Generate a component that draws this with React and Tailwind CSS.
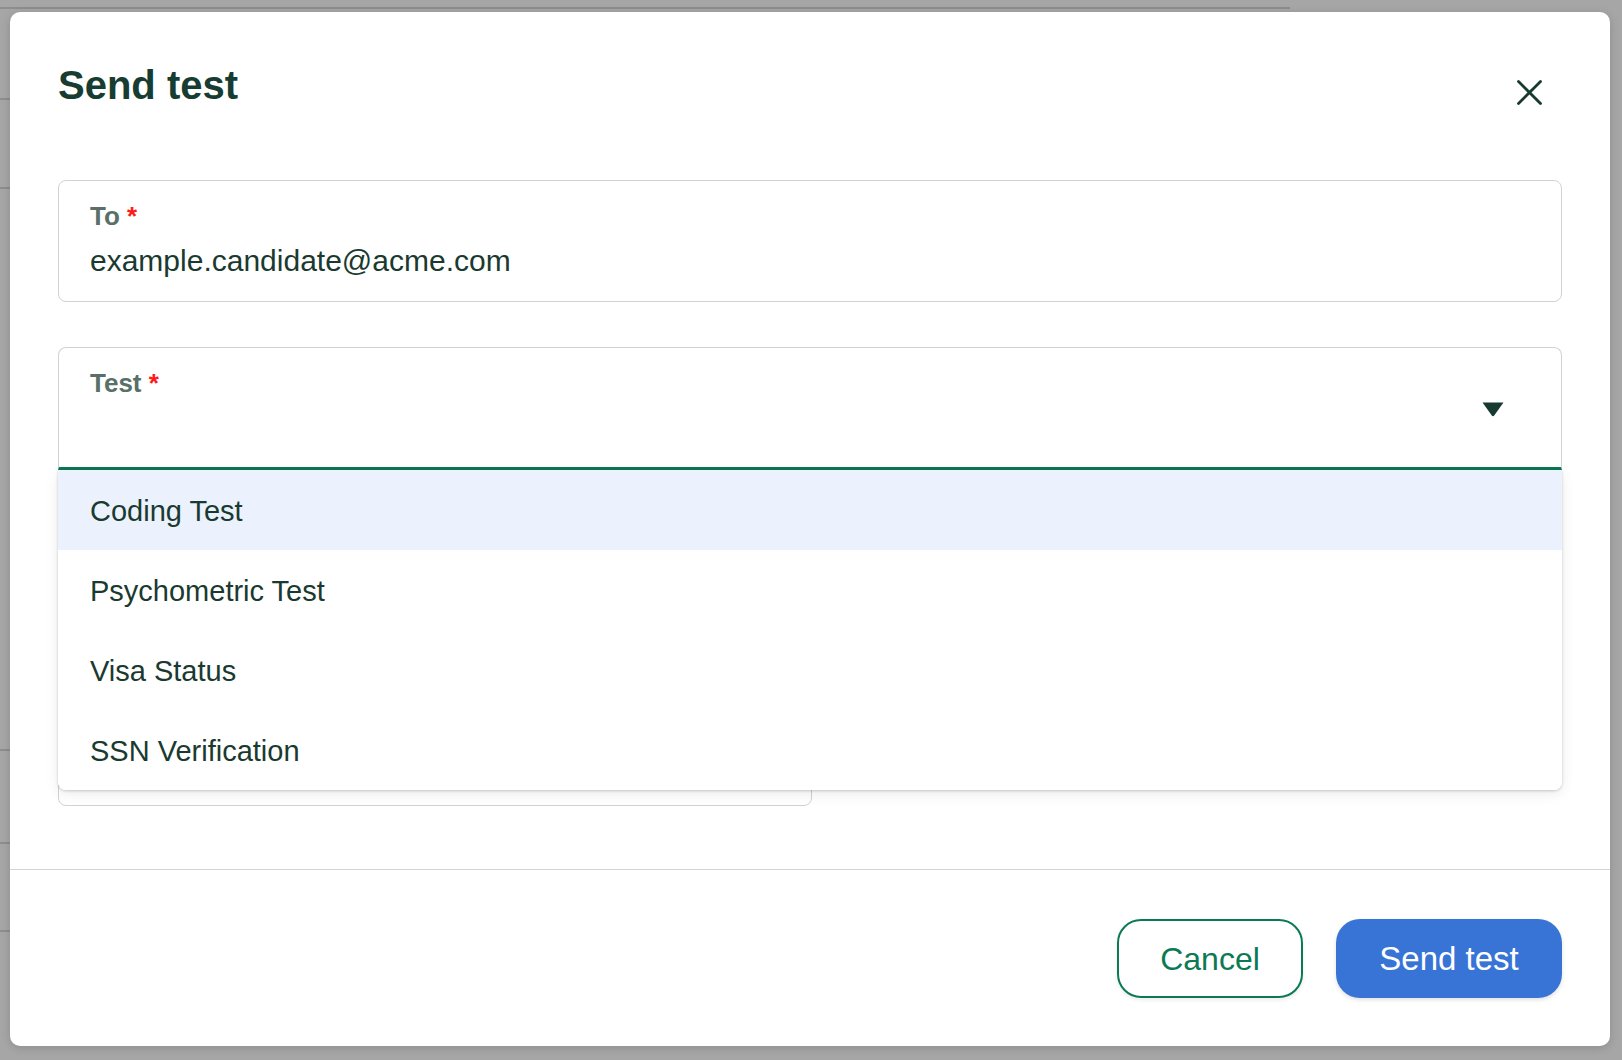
const options = ["Coding Test", "Psychometric Test", "Visa Status", "SSN Verification"];

const Field = ({ label, children, className = "" }) => (
  <div className={`flex flex-col pl-[31px] pt-[19px] border-[1.5px] border-[#cdd5d2] rounded-[8px] ${className}`}>
    <div className="text-[26px] leading-[32px] font-bold text-[#5a6f68]">
      {label} <span className="text-[#ff1a1a]">*</span>
    </div>
    {children}
  </div>
);

const App = () => {
  return (
    <div
      className="relative w-full h-screen bg-[#a6a6a6] overflow-hidden"
      style={{ fontFamily: '"Liberation Sans", Arial, sans-serif' }}
    >
      {/* page behind the overlay */}
      <div className="w-[1290px] h-[9px] border-b-2 border-[#8e8e8e]"></div>
      <div className="w-[10px] flex flex-col">
        <div className="h-[91px] border-b-2 border-[#8e8e8e]"></div>
        <div className="h-[89px] border-b-2 border-[#8e8e8e]"></div>
        <div className="h-[562px] border-b-2 border-[#8e8e8e]"></div>
        <div className="h-[93px] border-b-2 border-[#8e8e8e]"></div>
        <div className="h-[88px] border-b-2 border-[#8e8e8e]"></div>
      </div>

      {/* Modal */}
      <div className="absolute left-[10px] top-[12px] w-[1600px] bg-white rounded-[10px] flex flex-col shadow-[0_2px_10px_rgba(0,0,0,0.15)]">
        <div className="px-[48px] pt-[49px] pb-[63px] flex flex-col">
          {/* Header */}
          <div className="flex justify-between items-start mb-[71px]">
            <h1 className="text-[40px] leading-[48px] font-bold text-[#173c32]">Send test</h1>
            <button className="mt-[19px] mr-[20px]">
              <svg width="25" height="25" viewBox="0 0 25 25" fill="none" stroke="#173a30" strokeWidth="2.8" strokeLinecap="round">
                <path d="M1.5 1.5 L23.5 23.5 M23.5 1.5 L1.5 23.5" />
              </svg>
            </button>
          </div>

          <div className="flex flex-col gap-[45px]">
            {/* To */}
            <Field label="To" className="h-[122px]">
              <div className="mt-[11px] text-[30px] leading-[36px] text-[#1a3a30]">
                example.candidate@acme.com
              </div>
            </Field>

            {/* Test select with open menu */}
            <div className="relative z-10">
              <div className="h-[123px] flex justify-between border-[1.5px] border-b-[3px] border-[#cdd5d2] border-b-[#0b7852] rounded-t-[8px] pl-[31px] pt-[19px] pr-[57px]">
                <div className="text-[26px] leading-[32px] font-bold text-[#5a6f68]">
                  Test <span className="text-[#ff1a1a]">*</span>
                </div>
                <svg className="mt-[35px]" width="22" height="15" viewBox="0 0 22 15">
                  <path d="M0.5 0.5 H21.5 L12.2 13.6 Q11 15 9.8 13.6 Z" fill="#173a30" />
                </svg>
              </div>
              <div className="absolute left-0 right-0 top-full bg-white rounded-b-[8px] overflow-hidden shadow-[0_1px_3px_rgba(0,0,0,0.18),0_4px_14px_rgba(0,0,0,0.08)]">
                {options.map((o, i) => (
                  <div
                    key={o}
                    className={`h-[80px] flex items-center pl-[32px] pt-[4px] text-[29px] text-[#1a3a30] ${i === 0 ? "bg-[#ebf2fd]" : "bg-white"}`}
                  >
                    {o}
                  </div>
                ))}
              </div>
            </div>

            {/* fields hidden under the menu */}
            <div className="h-[122px] border-[1.5px] border-[#cdd5d2] rounded-[8px]"></div>
            <div className="h-[124px] w-[754px] border-[1.5px] border-[#cdd5d2] rounded-[8px]"></div>
          </div>
        </div>

        {/* Footer */}
        <div className="border-t-[1.5px] border-[#cfd6d4] flex justify-end gap-[33px] pt-[49px] pb-[48px] pr-[48px]">
          <button className="w-[186px] h-[79px] rounded-[24px] border-2 border-[#0b7a54] text-[#0b7a54] text-[32px] bg-white shadow-[0_2px_4px_rgba(0,0,0,0.08)]">
            Cancel
          </button>
          <button className="w-[226px] h-[79px] rounded-[24px] bg-[#3874d6] text-white text-[33px] shadow-[0_2px_4px_rgba(0,0,0,0.12)]">
            Send test
          </button>
        </div>
      </div>
    </div>
  );
};

export default App;
